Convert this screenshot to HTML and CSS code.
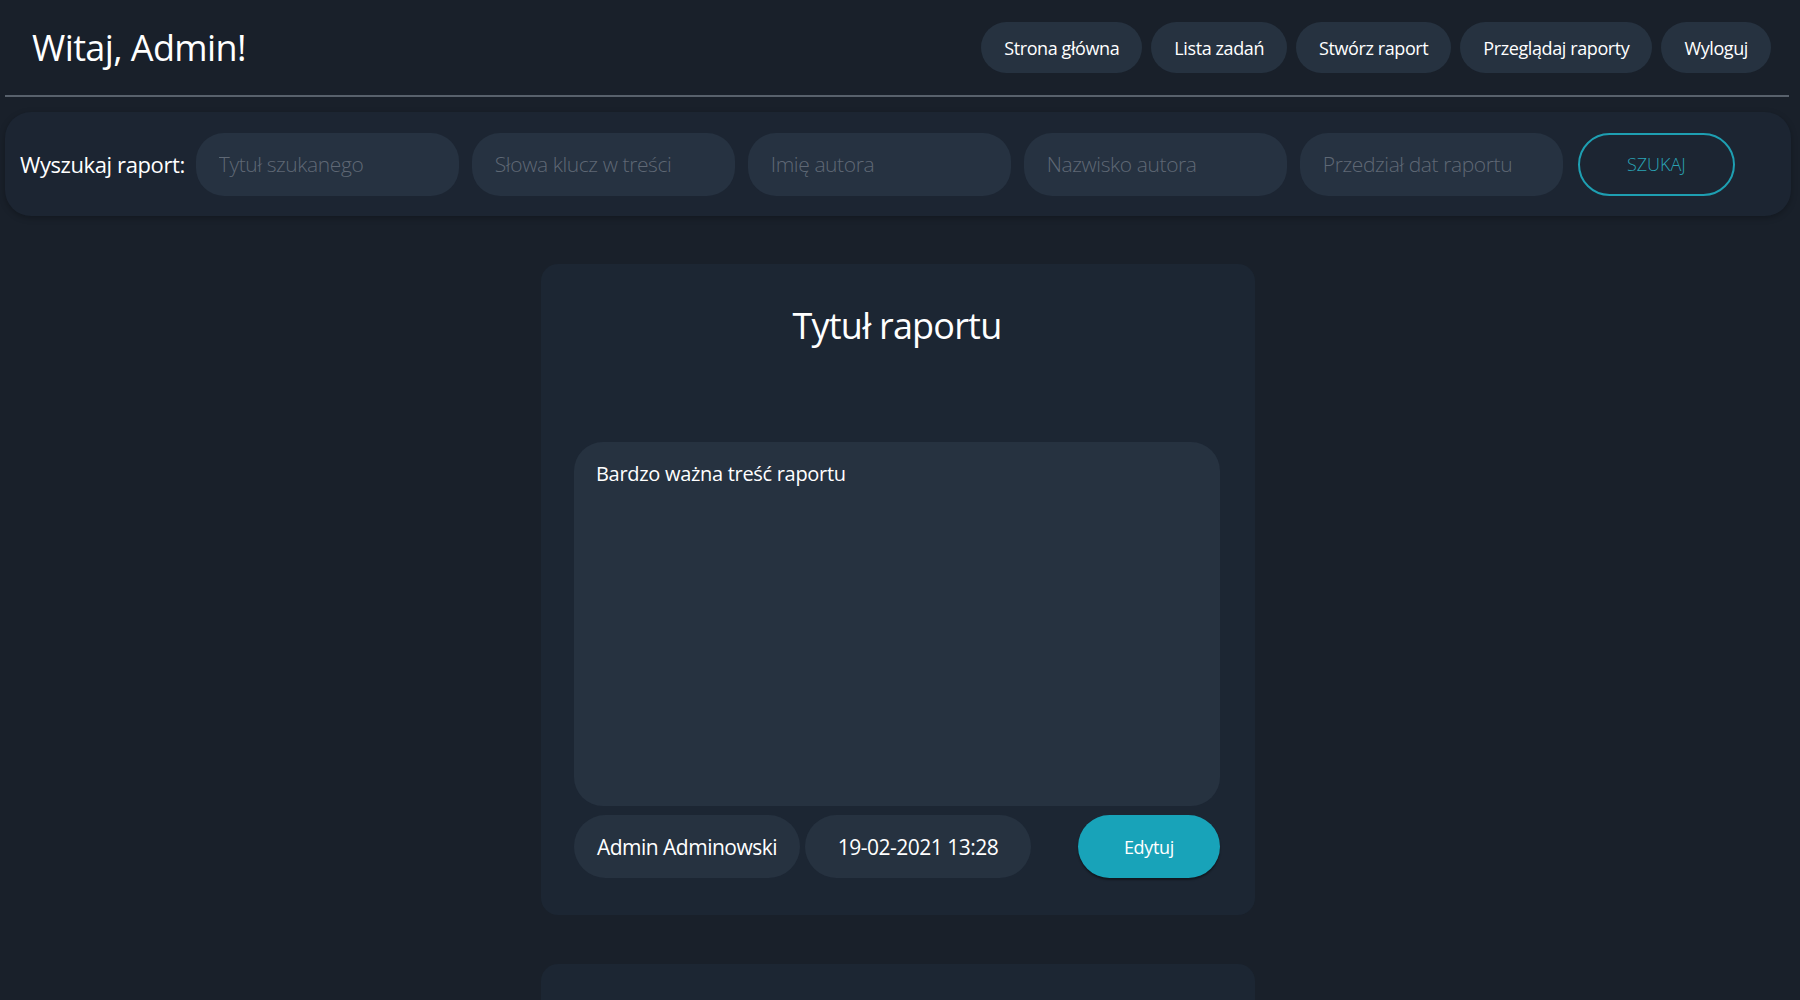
FILE: index.html
```html
<!DOCTYPE html>
<html lang="pl">
<head>
<meta charset="utf-8">
<title>Raporty</title>
<link rel="stylesheet" href="styles.css">
</head>
<body>
<div class="page">
  <header class="topbar">
    <h1 class="greeting">Witaj, Admin!</h1>
    <nav class="nav">
      <a class="nav-btn" href="#">Strona główna</a>
      <a class="nav-btn" href="#">Lista zadań</a>
      <a class="nav-btn" href="#">Stwórz raport</a>
      <a class="nav-btn" href="#">Przeglądaj raporty</a>
      <a class="nav-btn" href="#">Wyloguj</a>
    </nav>
  </header>
  <hr class="divider">
  <form class="search">
    <label class="search-label">Wyszukaj raport:</label>
    <input class="search-input" type="text" placeholder="Tytuł szukanego">
    <input class="search-input" type="text" placeholder="Słowa klucz w treści">
    <input class="search-input" type="text" placeholder="Imię autora">
    <input class="search-input" type="text" placeholder="Nazwisko autora">
    <input class="search-input" type="text" placeholder="Przedział dat raportu">
    <button class="search-btn" type="button">SZUKAJ</button>
  </form>
  <main class="reports">
    <article class="card">
      <h2 class="card-title">Tytuł raportu</h2>
      <div class="card-body">Bardzo ważna treść raportu</div>
      <div class="card-footer">
        <span class="pill">Admin Adminowski</span>
        <span class="pill">19-02-2021 13:28</span>
        <button class="edit-btn" type="button">Edytuj</button>
      </div>
    </article>
    <article class="card card-next"></article>
  </main>
</div>
</body>
</html>
```
FILE: styles.css
```css
* { box-sizing: border-box; }
html, body {
  margin: 0;
  background: #19202a;
  color: #ffffff;
  font-family: "Open Sans", "Noto Sans", sans-serif;
}
.page {
  padding: 0 9px 0 5px;
}
.topbar {
  display: flex;
  justify-content: space-between;
  align-items: center;
  height: 95px;
  padding: 0 20px 0 27px;
}
.greeting {
  margin: 0;
  font-size: 36px;
  font-weight: 400;
  letter-spacing: -0.6px;
}
.nav {
  display: flex;
  gap: 9px;
}
.nav-btn {
  display: flex;
  align-items: center;
  height: 51px;
  padding: 0 23px;
  border-radius: 26px;
  background: #263240;
  color: #ffffff;
  text-decoration: none;
  font-size: 18px;
  letter-spacing: -0.4px;
}
.divider {
  margin: 0 2px 0 0;
  border: 0;
  height: 2px;
  background: #58616c;
}
.search {
  display: flex;
  align-items: center;
  margin-top: 15px;
  height: 104px;
  padding: 0 15px;
  border-radius: 26px;
  background: #1c2532;
  box-shadow: 0 2px 6px rgba(0,0,0,0.25);
}
.search-label {
  font-size: 22px;
  letter-spacing: -0.4px;
  margin-right: 11px;
  white-space: nowrap;
}
.search-input {
  width: 263px;
  height: 63px;
  margin-right: 13px;
  padding: 0 23px;
  border: 0;
  border-radius: 28px;
  background: #263241;
  color: #ffffff;
  font-family: inherit;
  font-size: 21px;
  font-weight: 300;
  letter-spacing: -0.4px;
  outline: none;
}
.search-input::placeholder {
  color: #5f6875;
}
.search-btn {
  width: 157px;
  height: 63px;
  margin-left: 2px;
  border: 2px solid #1e9fb2;
  border-radius: 32px;
  background: transparent;
  color: #2aa3b5;
  font-family: inherit;
  font-size: 18px;
  font-weight: 300;
}
.reports {
  display: flex;
  flex-direction: column;
  align-items: center;
  gap: 49px;
  padding-top: 48px;
}
.card {
  width: 714px;
  padding: 37px 35px 37px 33px;
  border-radius: 17px;
  background: #1c2633;
}
.card-next {
  height: 200px;
}
.card-title {
  margin: 0;
  height: 141px;
  text-align: center;
  font-size: 36px;
  font-weight: 400;
  letter-spacing: -0.8px;
}
.card-body {
  height: 364px;
  padding: 18px 22px;
  border-radius: 29px;
  background: #263240;
  font-size: 20px;
  letter-spacing: -0.3px;
}
.card-footer {
  display: flex;
  align-items: center;
  gap: 5px;
  margin-top: 9px;
}
.pill {
  display: flex;
  align-items: center;
  justify-content: center;
  width: 226px;
  height: 63px;
  border-radius: 32px;
  background: #263240;
  font-size: 21px;
  letter-spacing: -0.5px;
}
.edit-btn {
  width: 142px;
  height: 63px;
  margin-left: auto;
  border: 0;
  border-radius: 32px;
  background: #18a3b9;
  color: #ffffff;
  font-family: inherit;
  font-size: 18px;
  letter-spacing: -0.3px;
  box-shadow: 0 2px 2px rgba(0,0,0,0.4);
}
```
